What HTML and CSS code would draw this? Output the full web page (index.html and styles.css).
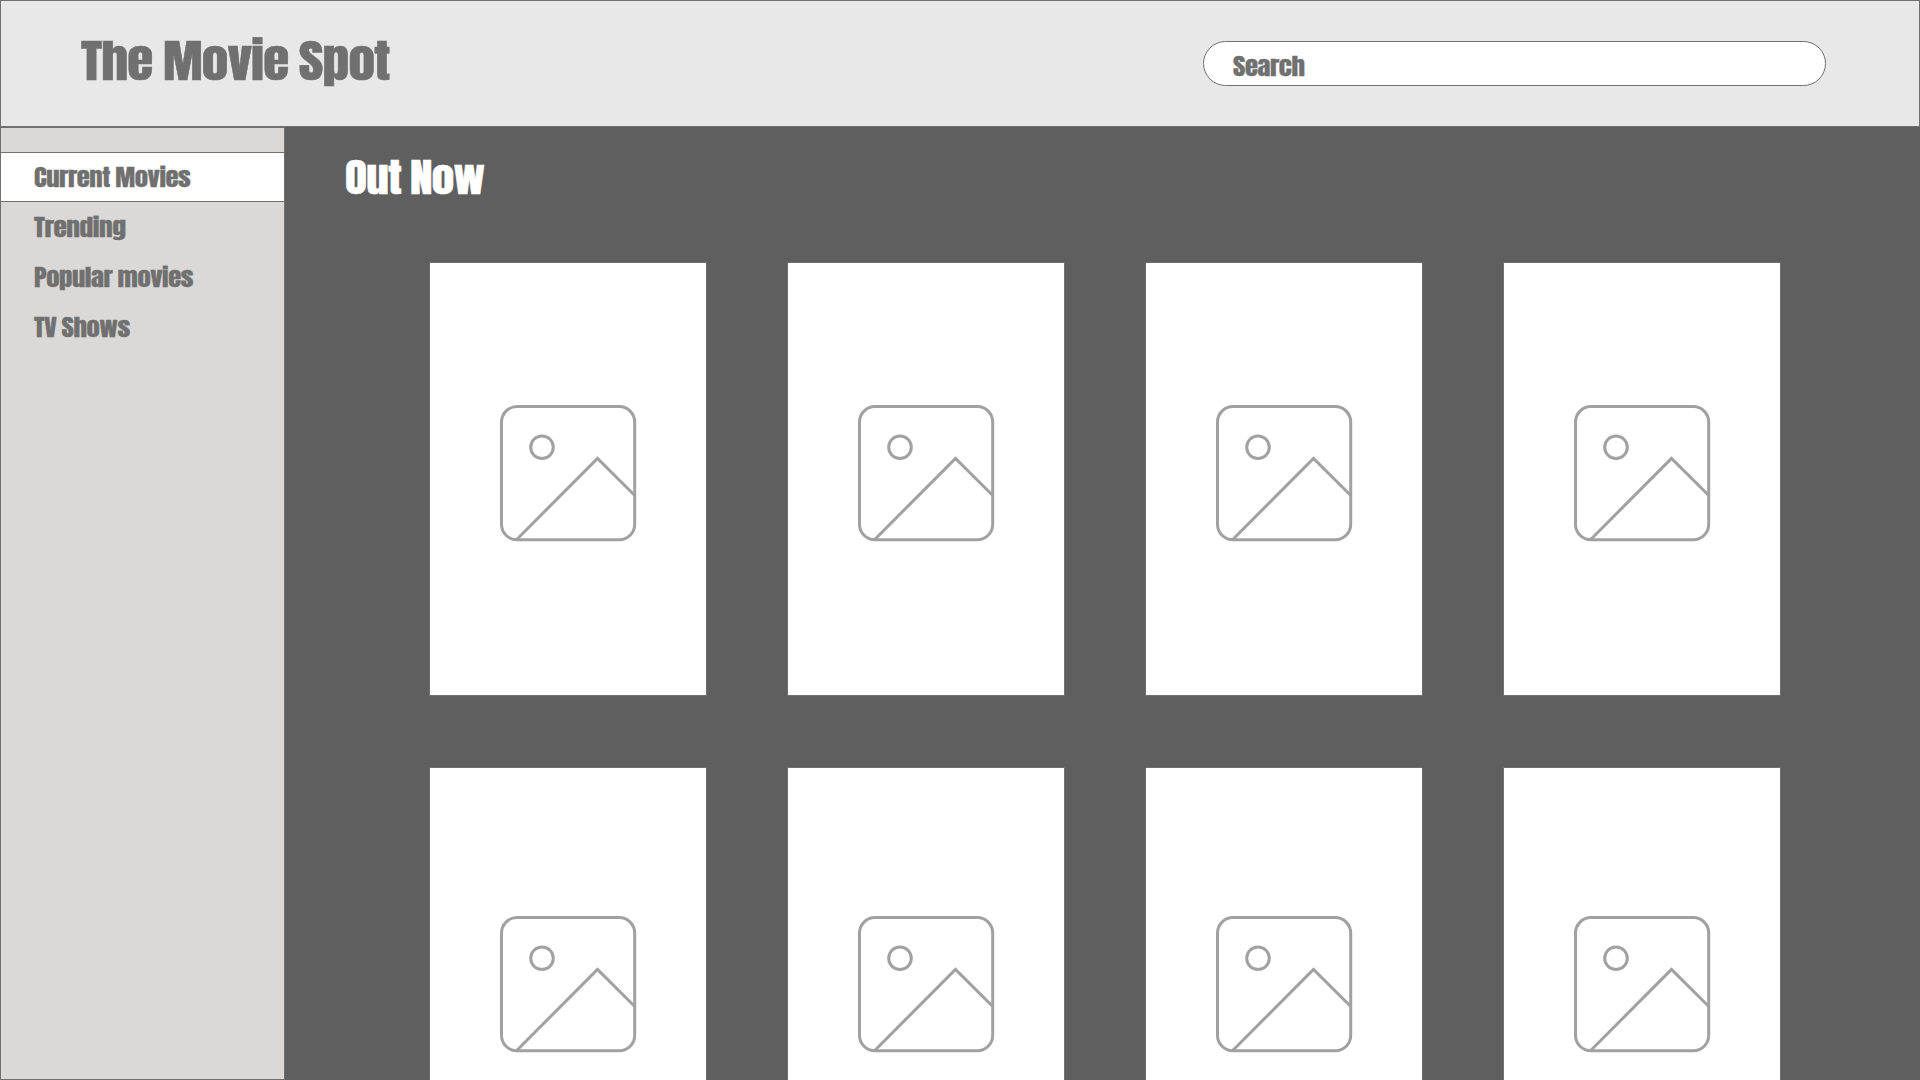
FILE: index.html
```html
<!DOCTYPE html>
<html lang="en">
<head>
<meta charset="utf-8">
<title>The Movie Spot</title>
<link rel="stylesheet" href="styles.css">
</head>
<body>
<svg class="defs" aria-hidden="true">
  <symbol id="picture" viewBox="0 0 137 137">
    <rect x="1.5" y="1.6" width="133.2" height="133.2" rx="15.5"/>
    <circle cx="42" cy="42.2" r="11.3"/>
    <path d="M16.7 134.5 97.5 53.4 134.5 90.2"/>
  </symbol>
</svg>
<header class="header">
  <h1 class="logo"><span class="wide">The Movie Spot</span></h1>
  <div class="search"><span class="wide small">Search</span></div>
</header>
<div class="body">
  <nav class="sidebar">
    <a class="nav-item active"><span class="wide small">Current Movies</span></a>
    <a class="nav-item"><span class="wide small short">Trending</span></a>
    <a class="nav-item"><span class="wide small">Popular movies</span></a>
    <a class="nav-item"><span class="wide small">TV Shows</span></a>
  </nav>
  <main class="main">
    <h2 class="heading"><span class="wide">Out Now</span></h2>
    <div class="grid">
      <div class="card"><svg class="picture"><use href="#picture"/></svg></div>
      <div class="card"><svg class="picture"><use href="#picture"/></svg></div>
      <div class="card"><svg class="picture"><use href="#picture"/></svg></div>
      <div class="card"><svg class="picture"><use href="#picture"/></svg></div>
      <div class="card"><svg class="picture"><use href="#picture"/></svg></div>
      <div class="card"><svg class="picture"><use href="#picture"/></svg></div>
      <div class="card"><svg class="picture"><use href="#picture"/></svg></div>
      <div class="card"><svg class="picture"><use href="#picture"/></svg></div>
    </div>
  </main>
</div>
</body>
</html>
```
FILE: styles.css
```css
* { box-sizing: border-box; }

body {
  margin: 0;
  height: 1080px;
  display: flex;
  flex-direction: column;
  overflow: hidden;
  background: #5f5f5f;
  color: #707070;
  font-family: Anton, "Open Sans", sans-serif;
}

.defs { display: none; }

/* The face is drawn expanded, slightly heavier and tightly spaced. */
.wide {
  display: inline-block;
  transform: scaleX(1.16);
  transform-origin: left center;
  white-space: nowrap;
  letter-spacing: -0.017em;
  word-spacing: -0.02em;
  -webkit-text-stroke: 0.5px currentColor;
}

.wide.small {
  letter-spacing: -0.016em;
  -webkit-text-stroke-width: 0.3px;
}

.wide.short { transform: scaleX(1.19); }

.header {
  flex: none;
  height: 127px;
  display: flex;
  justify-content: space-between;
  align-items: flex-start;
  padding: 40px 93px 0 80px;
  border: 1px solid #707070;
  background: #e8e8e8;
}

.logo {
  margin: 0;
  font-size: 46px;
  font-weight: 400;
  line-height: 40px;
}

.search {
  width: 623px;
  height: 45px;
  padding-left: 29px;
  border: 1px solid #707070;
  border-radius: 23px;
  background: #fff;
  font-size: 23px;
  line-height: 50px;
}

.body {
  flex: 1;
  min-height: 0;
  display: flex;
}

.sidebar {
  flex: none;
  width: 285px;
  padding-top: 24px;
  border: 1px solid #707070;
  background: #dad9d7;
}

.nav-item {
  display: block;
  height: 50px;
  padding-left: 33px;
  font-size: 23px;
  line-height: 52px;
}

.nav-item.active {
  border-top: 1px solid #707070;
  border-bottom: 1px solid #707070;
  background: #fff;
  line-height: 50px;
}

.main {
  flex: 1;
  padding-left: 60px;
  overflow: hidden;
}

.heading {
  margin: 31px 0 0;
  height: 104px;
  color: #fff;
  font-size: 39px;
  font-weight: 400;
  line-height: 40px;
}

.grid {
  display: grid;
  grid-template-columns: repeat(4, 278px);
  grid-template-rows: 434px 445px;
  gap: 71px 80px;
  padding-left: 84px;
}

.card {
  display: flex;
  justify-content: center;
  align-items: center;
  padding: 0 0 11px 1px;
  border: 1px solid #707070;
  background: #fff;
}

.picture {
  width: 137px;
  height: 137px;
  fill: none;
  stroke: #a1a1a1;
  stroke-width: 3;
}
```
